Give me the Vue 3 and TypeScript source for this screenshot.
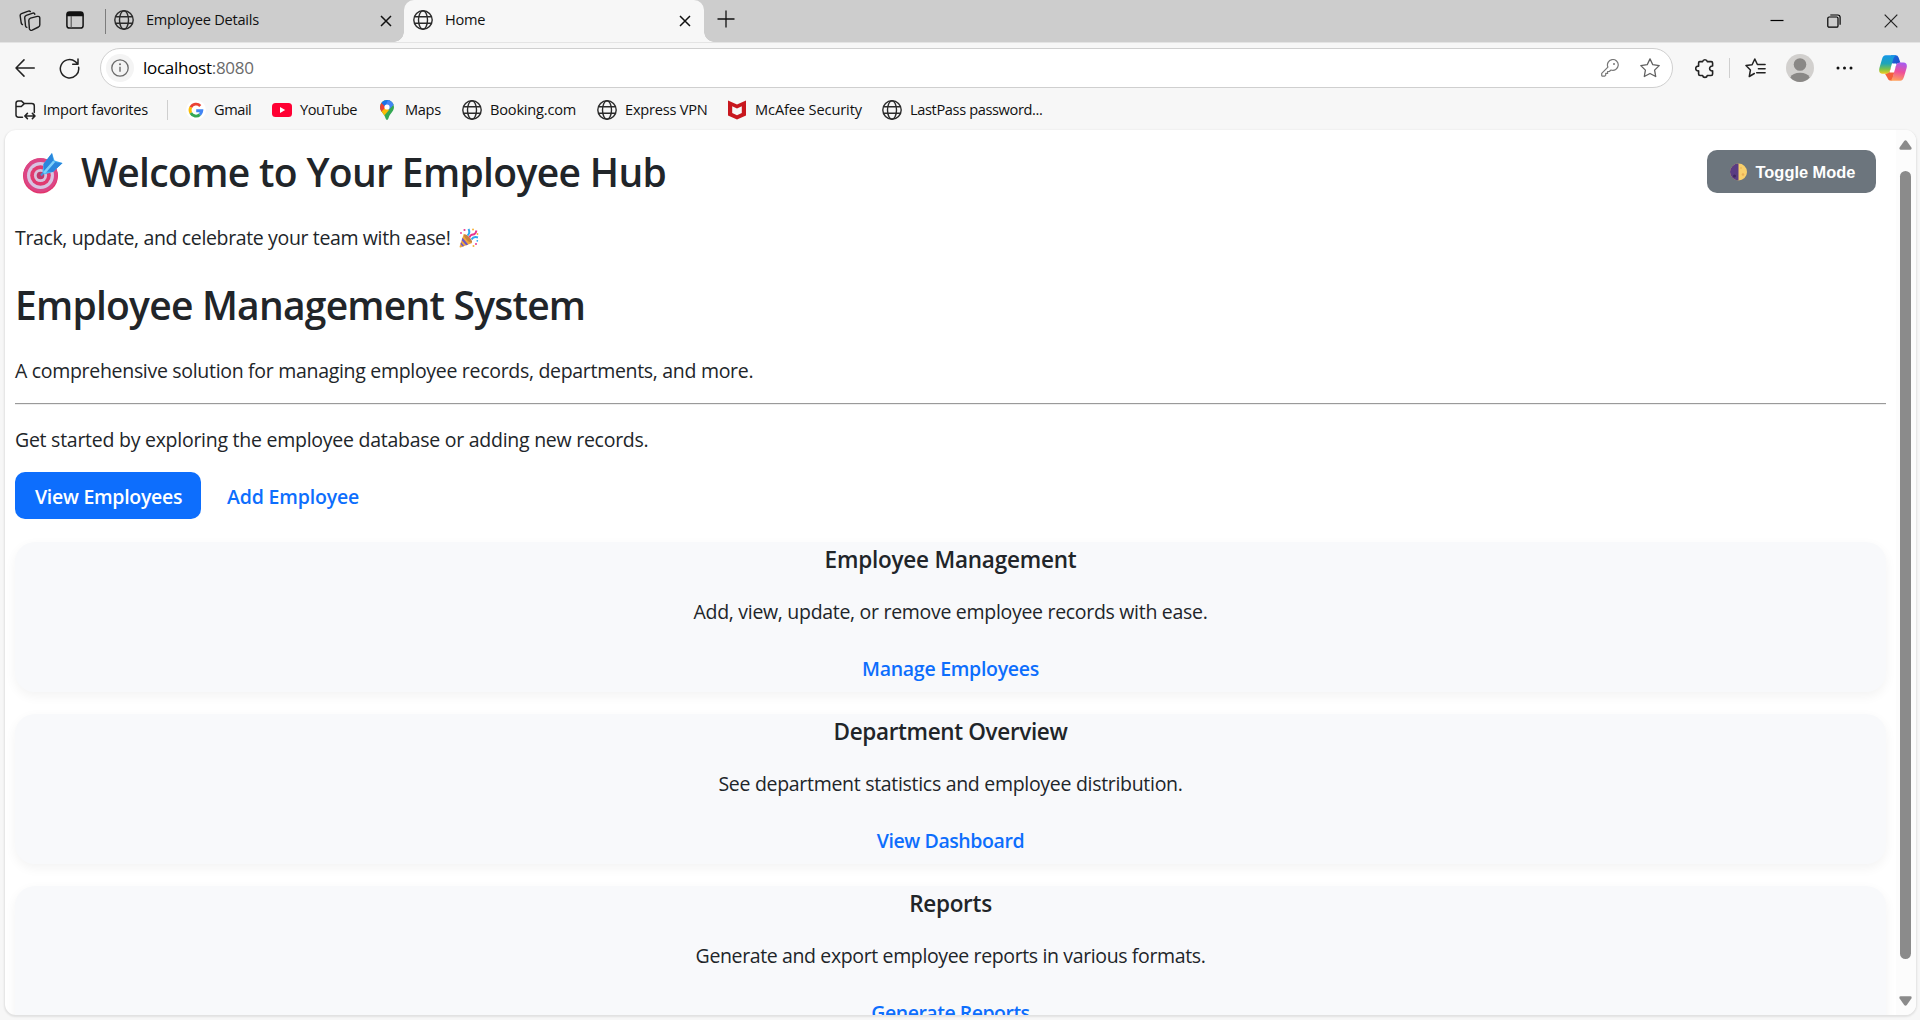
<script setup lang="ts">
interface Bookmark {
  label: string
  icon: 'google' | 'youtube' | 'maps' | 'globe' | 'mcafee'
  width: number
  spacing: number
}

interface Feature {
  title: string
  text: string
  action: string
  spacing: [number, number, number]
}

const bookmarks: Bookmark[] = [
  { label: 'Gmail', icon: 'google', width: 86, spacing: -0.45 },
  { label: 'YouTube', icon: 'youtube', width: 105, spacing: -0.43 },
  { label: 'Maps', icon: 'maps', width: 85, spacing: -0.33 },
  { label: 'Booking.com', icon: 'globe', width: 135, spacing: -0.2 },
  { label: 'Express VPN', icon: 'globe', width: 130, spacing: -0.23 },
  { label: 'McAfee Security', icon: 'mcafee', width: 155, spacing: -0.12 },
  { label: 'LastPass password...', icon: 'globe', width: 180, spacing: -0.37 },
]

const features: Feature[] = [
  {
    title: 'Employee Management',
    text: 'Add, view, update, or remove employee records with ease.',
    action: 'Manage Employees',
    spacing: [-0.22, -0.3, -0.28],
  },
  {
    title: 'Department Overview',
    text: 'See department statistics and employee distribution.',
    action: 'View Dashboard',
    spacing: [-0.35, -0.3, -0.41],
  },
  {
    title: 'Reports',
    text: 'Generate and export employee reports in various formats.',
    action: 'Generate Reports',
    spacing: [-0.28, -0.37, -0.49],
  },
]

const track = (value: number) => ({ letterSpacing: `${value}px` })
</script>

<template>
  <div class="browser">
    <svg class="defs" width="0" height="0" aria-hidden="true">
      <symbol id="globe" viewBox="0 0 20 20">
        <g fill="none" stroke="#2b2b2b" stroke-width="1.4">
          <circle cx="10" cy="10" r="9.2" />
          <ellipse cx="10" cy="10" rx="4.5" ry="9.2" />
          <path d="M1.6 6.7h16.8M1.6 13.3h16.8" />
        </g>
      </symbol>
      <symbol id="close" viewBox="0 0 12 12">
        <path d="M1 1l10 10M11 1L1 11" fill="none" stroke="#111" stroke-width="1.5" />
      </symbol>
    </svg>

    <header class="tabstrip">
      <svg class="workspaces" width="22" height="22" viewBox="0 0 22 22" fill="none" stroke="#1c1c1c" stroke-width="1.4" stroke-linejoin="round" stroke-linecap="round">
        <path d="M11.500 8.100l6.800-1.700q2.300-.4 2.500 1.400v7q0 1.500-1.300 2.200l-6.300 3.100q-2.200.8-2.800-1.200l-.6-8.300q0-1.900 1.700-2.500z" />
        <path d="M15.900 4.200q-.5-1.500-2.100-1L7.300 5.400Q5.500 6.200 5.700 7.800l.8 8q.2 1.200 1.300 1.600" />
        <path d="M11.300 1.500Q10.500.6 9.300 1.100L2.500 3.700Q.9 4.400 1.200 6l1 7q.3 1.200 1.200 1.500" />
      </svg>
      <svg class="tabmenu" width="18" height="18" viewBox="0 0 18 18">
        <rect x=".9" y=".9" width="16.2" height="16.2" rx="2.6" fill="none" stroke="#111" stroke-width="1.5" />
        <path d="M.9 5.200V3.200A2.300 2.300 0 013.200.9h11.600a2.300 2.300 0 012.300 2.300v2z" fill="#111" />
        <path d="M5.200 5v12" stroke="#555" stroke-width="1.100" />
      </svg>
      <span class="strip-rule"></span>
      <div class="tab tab-idle">
        <svg width="20" height="20"><use href="#globe" /></svg>
        <span class="tab-title">Employee Details</span>
        <svg class="tab-close" width="12" height="12"><use href="#close" /></svg>
      </div>
      <div class="tab tab-active">
        <svg width="20" height="20"><use href="#globe" /></svg>
        <span class="tab-title">Home</span>
        <svg class="tab-close" width="12" height="12"><use href="#close" /></svg>
      </div>
      <svg class="newtab" width="18" height="18" viewBox="0 0 18 18"><path d="M9 .5v17M.5 9h17" stroke="#111" stroke-width="1.300" /></svg>
      <div class="window-controls">
        <svg width="14" height="14" viewBox="0 0 14 14"><path d="M.5 6.500h13" stroke="#000" stroke-width="1.200" /></svg>
        <svg width="14" height="14" viewBox="0 0 14 14" fill="none" stroke="#000" stroke-width="1.200">
          <rect x=".8" y="3" width="10.200" height="10.200" rx="1.300" />
          <path d="M3.300 1h7.500q2.300 0 2.300 2.300v7.500" />
        </svg>
        <svg width="14" height="14" viewBox="0 0 14 14"><path d="M.7.7l12.600 12.600M13.300.7L.7 13.300" stroke="#222" stroke-width="1.200" /></svg>
      </div>
    </header>

    <nav class="toolbar">
      <svg class="back" width="20" height="18" viewBox="0 0 20 18" fill="none" stroke="#222" stroke-width="1.500" stroke-linecap="round" stroke-linejoin="round"><path d="M19.300 9H1M9 .9L1 9l8 8.100" /></svg>
      <svg class="reload" width="21" height="21" viewBox="0 0 21 21" fill="none" stroke="#222" stroke-width="1.500" stroke-linecap="round" stroke-linejoin="round"><path d="M19.600 9.200A9.200 9.200 0 1116.300 3.600l2.500 2.200M19 1v5.200h-5.300" /></svg>
      <div class="address">
        <span class="site-info">
          <svg width="18" height="18" viewBox="0 0 18 18"><circle cx="9" cy="9" r="8.200" fill="none" stroke="#6b6b6b" stroke-width="1.300" /><path d="M9 7.800v5" stroke="#6b6b6b" stroke-width="1.400" /><circle cx="9" cy="5.300" r="1" fill="#6b6b6b" /></svg>
        </span>
        <span class="url">localhost<span class="port">:8080</span></span>
        <svg class="key" width="18" height="18" viewBox="0 0 18 18" fill="none" stroke="#777" stroke-width="1.200" stroke-linejoin="round"><path d="M6.900 8.100A5.400 5.400 0 1110 11l-1.700 1.500H6.600v1.900H4.700v1.800l-.9.900H1.100q-.4 0-.4-.5v-2.300z" /><circle cx="13" cy="4.900" r="1" fill="#777" stroke="none" /></svg>
        <svg class="star" width="20" height="20" viewBox="0 0 20 20" fill="none" stroke="#606060" stroke-width="1.300" stroke-linejoin="round"><path d="M10 .9l2.800 5.800 6.400.9-4.600 4.500 1.100 6.400L10 15.500l-5.700 3 1.100-6.400L.8 7.600l6.400-.9z" /></svg>
      </div>
      <svg class="extensions" width="20" height="21" viewBox="0 0 20 21" fill="none" stroke="#222" stroke-width="1.600" stroke-linejoin="round"><path d="M4.700 3.600h2.900a2.400 2.400 0 014.700 0h3.900q1.400 0 1.400 1.400v3a2.500 2.500 0 100 4.900v3.100q0 1.500-1.500 1.500h-3.800a2.400 2.400 0 01-4.700 0H5.100q-1.500 0-1.500-1.500v-3.100a2.400 2.400 0 110-4.700V5q0-1.400 1.100-1.400z" /></svg>
      <span class="tool-rule"></span>
      <svg class="favorites" width="21" height="20" viewBox="0 0 21 20" fill="none" stroke="#222" stroke-width="1.500" stroke-linejoin="round" stroke-linecap="round"><path d="M9.300 15.500l-5 3 1.100-6.400L1 7.600l6.100-.9L9.800 1l2.600 5.500h7.700M13.400 10.800h6.700M11.700 14.800h8.400" /></svg>
      <svg class="avatar" width="28" height="28" viewBox="0 0 28 28"><circle cx="14" cy="14" r="14" fill="#d2d0ce" /><circle cx="14" cy="10.500" r="6.300" fill="#8a8886" /><path d="M4.300 23.500a10.300 7 0 0119.400 0A14 14 0 0114 28a14 14 0 01-9.700-4.500z" fill="#8a8886" /></svg>
      <svg class="more" width="17" height="4" viewBox="0 0 17 4" fill="#111"><circle cx="2" cy="2" r="1.500" /><circle cx="8.500" cy="2" r="1.500" /><circle cx="15" cy="2" r="1.500" /></svg>
      <svg class="copilot" width="28" height="26" viewBox="0 0 28 26">
        <defs>
          <linearGradient id="cpA" x1="0" y1="0" x2="0" y2="1"><stop offset="0" stop-color="#1597e8" /><stop offset=".45" stop-color="#1fa5b8" /><stop offset=".75" stop-color="#7cc24a" /><stop offset="1" stop-color="#f1cb1d" /></linearGradient>
          <linearGradient id="cpB" x1=".6" y1="0" x2=".4" y2="1"><stop offset="0" stop-color="#a65cf0" /><stop offset=".5" stop-color="#ee4f9a" /><stop offset="1" stop-color="#ffa25c" /></linearGradient>
          <linearGradient id="cpC" x1="0" y1="0" x2="1" y2="1"><stop offset="0" stop-color="#1b6fe0" /><stop offset="1" stop-color="#2044c4" /></linearGradient>
        </defs>
        <path d="M12 .3h4.600q2.200 0 3 2.300l1.800 5.200q-3.500-.2-4.400 2.700l-.8 2.200L13 8z" fill="url(#cpC)" />
        <path d="M6 18.700q4-.2 5-3.400l.8-2.700 3.700 4.600-2.500 8.300q-3.500.5-4.600-2.800z" fill="#f4603a" />
        <path d="M13 8.500h4q.8-.2.300 1.300L15 17.500h-4.500z" fill="#fff" />
        <path d="M6.800.3h10.600q-2.200.6-3 3.300L11 15.300q-1 3.500-4.200 3.500H3.500Q-.8 18.500.4 13L2.900 4.500Q4 .3 6.800.3z" fill="url(#cpA)" />
        <path d="M21.200 25.700H10.600q2.200-.6 3-3.300L17 10.700q1-3.300 4.200-3.300h3.300q4.300.3 3.100 5.600l-2.500 8.500q-1.100 4.200-3.900 4.200z" fill="url(#cpB)" />
      </svg>
    </nav>

    <nav class="bookmarks">
      <div class="bookmark import">
        <svg width="21" height="20" viewBox="0 0 21 20" fill="none" stroke="#222" stroke-width="1.500" stroke-linejoin="round" stroke-linecap="round"><path d="M7.500 17.200H3.400Q1 17.200 1 14.800V3.200Q1 .9 3.300.9h3l3 2.700h7.500q2.500 0 2.500 2.500v6.500M1 6.500h5.300l3-2.900M10 16h9.700M12.400 13.400L9.800 16l2.600 2.600M17.400 13.400L20 16l-2.600 2.600" /></svg>
        <span>Import favorites</span>
      </div>
      <span class="bookmark-rule"></span>
      <div v-for="b in bookmarks" :key="b.label" class="bookmark" :style="{ width: `${b.width}px` }">
        <svg v-if="b.icon === 'globe'" width="20" height="20"><use href="#globe" /></svg>
        <svg v-else-if="b.icon === 'google'" width="20" height="20" viewBox="0 0 20 20">
          <circle cx="10" cy="10" r="10" fill="#fff" />
          <g fill="none" stroke-width="2.900">
            <path d="M14.300 5.900A5.900 5.900 0 004.800 7.300" stroke="#ea4335" />
            <path d="M4.800 7.300a5.900 5.900 0 000 5.700" stroke="#fbbc05" />
            <path d="M4.800 13a5.900 5.900 0 009.100 1.600" stroke="#34a853" />
            <path d="M13.900 14.600a5.800 5.800 0 001.900-3.900H10.200" stroke="#4285f4" />
          </g>
        </svg>
        <svg v-else-if="b.icon === 'youtube'" width="20" height="20" viewBox="0 0 20 20"><rect y="3" width="20" height="14" rx="3.500" fill="#ff0033" /><path d="M8 7l5.200 3L8 13z" fill="#fff" /></svg>
        <svg v-else-if="b.icon === 'maps'" width="20" height="20" viewBox="0 0 20 20">
          <clipPath id="pin"><path d="M10 0a7 7 0 017 7c0 4.500-4.200 6.200-5.500 11.200Q10.900 20 10 20t-1.500-1.800C7.200 13.200 3 11.500 3 7a7 7 0 017-7z" /></clipPath>
          <g clip-path="url(#pin)">
            <path d="M0 0h20v20H0z" fill="#34a853" />
            <path d="M0 8l4.800-5.500L10 7 5 12.500 0 13z" fill="#ea4335" />
            <path d="M3.500 0h12L9 7.500 4.500 3z" fill="#1a73e8" />
            <path d="M11 0h6v4.500L11.500 10 8 7z" fill="#4285f4" />
            <path d="M3 13l6-6 3 3-6 7z" fill="#fbbc04" />
          </g>
          <circle cx="10" cy="7" r="2.600" fill="#fff" />
        </svg>
        <svg v-else width="20" height="20" viewBox="0 0 20 20"><path d="M1 .6l9 4 9-4V15.400L10 19.600l-9-4.200z" fill="#c8171e" /><path d="M5.200 6.200l4.800 2.200 4.800-2.200v6.700L10 15.200l-4.800-2.300z" fill="#f7f7f7" /></svg>
        <span :style="track(b.spacing)">{{ b.label }}</span>
      </div>
    </nav>

    <div class="viewport">
      <main class="page">
        <div class="topline">
          <h1 class="welcome">
            <svg class="target" width="41" height="42" viewBox="0 0 41 42">
              <circle cx="18.500" cy="24" r="17.500" fill="#e2356c" />
              <circle cx="18.500" cy="23" r="17" fill="#dc4585" />
              <circle cx="18.500" cy="23.500" r="13.500" fill="#d8c3e2" />
              <circle cx="18.500" cy="23.500" r="10.300" fill="#e03a70" />
              <circle cx="18.500" cy="23.500" r="6.600" fill="#d9c0dc" />
              <circle cx="18.500" cy="23.500" r="3.800" fill="#c0386b" />
              <path d="M19 23.500L31 10" stroke="#4b8fd8" stroke-width="2" />
              <path d="M20.500 19.500l1-7.500 8.500-11 2.500 7.500 8 2.500-9.500 9-9 2.500z" fill="#47b4f2" />
              <path d="M30 1l1.500 8L22 19l-.5-7zM40.500 11l-8.500-1-7.500 9.500 6.500.5z" fill="#2b86dc" />
              <path d="M32 9.500L22 21" stroke="#7ed0fa" stroke-width="2.500" />
            </svg>
            <span>Welcome to Your Employee Hub</span>
          </h1>
          <button class="toggle" type="button">
            <svg width="17" height="18" viewBox="0 0 17 18"><circle cx="8.500" cy="9" r="8.500" fill="#f8cf6b" /><path d="M8.500.5a8.500 8.500 0 000 17z" fill="#5b3c82" /><circle cx="4.500" cy="13" r="1.500" fill="#41275f" /><circle cx="13" cy="11.500" r="1.300" fill="#e8ae56" /><circle cx="11" cy="5" r="1" fill="#eebb5c" /></svg>
            <span>Toggle Mode</span>
          </button>
        </div>
        <p class="tagline">
          <span>Track, update, and celebrate your team with ease!</span>
          <svg width="20" height="20" viewBox="0 0 20 20">
            <path d="M4.800 5.800L.6 18.500q-.2 1.200 1 .9l11.600-4.300z" fill="#f2a93b" />
            <path d="M3.500 9.800l5.700 6.700-2 .7-4.500-5zM2 14.300l3.200 3.700-1.700.6-2-2.500z" fill="#6b55c8" />
            <ellipse cx="9" cy="10.500" rx="2" ry="5.600" transform="rotate(-43 9 10.500)" fill="#c9823f" />
            <path d="M8.500 7.500q3-2.500 1-6.500M12.500 11.500q2-3.500 6.500-2" fill="none" stroke="#2fa6ee" stroke-width="2" />
            <path d="M10.500 9.500q1-3 3.500-3t3.500-4" fill="none" stroke="#e8368f" stroke-width="1.900" />
            <g fill="#e8368f"><circle cx="5.500" cy="2" r="1.100" /><circle cx="2" cy="5" r=".9" /><circle cx="17" cy="16" r="1" /></g>
            <g fill="#f7b23b"><circle cx="14" cy="1.500" r="1" /><circle cx="18.500" cy="6" r=".9" /><circle cx="14.500" cy="18" r="1" /></g>
            <circle cx="18.300" cy="12.800" r=".9" fill="#2fa6ee" />
          </svg>
        </p>
        <h1 class="heading">Employee Management System</h1>
        <p class="summary">A comprehensive solution for managing employee records, departments, and more.</p>
        <hr />
        <p class="intro">Get started by exploring the employee database or adding new records.</p>
        <div class="actions">
          <a class="btn primary">View Employees</a>
          <a class="btn link">Add Employee</a>
        </div>
        <section v-for="f in features" :key="f.title" class="card">
          <h5 :style="track(f.spacing[0])">{{ f.title }}</h5>
          <p :style="track(f.spacing[1])">{{ f.text }}</p>
          <a :style="track(f.spacing[2])">{{ f.action }}</a>
        </section>
      </main>
      <aside class="scrollbar">
        <svg width="13" height="10" viewBox="0 0 13 10"><path d="M5.200.9q1.300-1.500 2.600 0l4.600 6.600q.8 2-1 2.200H1.600q-1.800-.2-1-2.200z" fill="#8b8b8b" /></svg>
        <span class="thumb"></span>
        <svg width="13" height="10" viewBox="0 0 13 10"><path d="M5.200 9.100q1.300 1.500 2.600 0l4.600-6.600q.8-2-1-2.200H1.600q-1.800.2-1 2.200z" fill="#8b8b8b" /></svg>
      </aside>
    </div>
  </div>
</template>

<style>
body { background: #f7f7f7; overflow: hidden; }
</style>

<style scoped>
* { box-sizing: border-box; }
svg { flex: none; display: block; }
.defs { position: absolute; }
.browser { width: 1920px; height: 1020px; display: flex; flex-direction: column; overflow: hidden; background: #f7f7f7; color: #111; font-family: "Open Sans", "Noto Sans", sans-serif; font-size: 14.6px; }

.tabstrip { height: 42px; flex: none; display: flex; align-items: flex-start; background: #cdcdcd; }
.workspaces { margin: 10px 0 0 19px; }
.tabmenu { margin: 11px 0 0 25px; }
.strip-rule { width: 1px; height: 25px; margin: 9px 0 0 21px; background: #7c7c7c; }
.tab { display: flex; align-items: center; height: 42px; padding-bottom: 2px; }
.tab-title { flex: 1; line-height: 20px; margin-bottom: 2px; letter-spacing: -0.25px; }
.tab-idle { width: 298px; padding-left: 8px; padding-right: 12px; }
.tab-idle .tab-title { margin-left: 12px; }
.tab-active { width: 300px; padding-left: 9px; padding-right: 13px; background: #f7f7f7; border-radius: 10px 10px 0 0; position: relative; }
.tab-active .tab-title { margin-left: 12px; }
.tab-active::before, .tab-active::after { content: ""; position: absolute; bottom: 0; width: 10px; height: 10px; }
.tab-active::before { left: -10px; background: radial-gradient(circle at 0 0, transparent 9.5px, #f7f7f7 10px); }
.tab-active::after { right: -10px; background: radial-gradient(circle at 100% 0, transparent 9.5px, #f7f7f7 10px); }
.tab-close { margin-top: 1px; }
.newtab { margin: 10px 0 0 13px; }
.window-controls { margin: 14px 22px 0 auto; display: flex; gap: 43px; }

.toolbar { height: 51px; flex: none; display: flex; align-items: center; padding: 0 13px 0 15px; border-top: 1px solid #e4e4e4; }
.reload { margin-left: 24px; }
.address { width: 1573px; height: 40px; margin-left: 20px; display: flex; align-items: center; border: 1px solid #cfcfcf; border-radius: 20px; background: #fff; padding: 0 12px 0 5px; }
.site-info { width: 28px; height: 28px; display: flex; align-items: center; justify-content: center; border-radius: 50%; background: #f4f4f4; }
.url { flex: 1; margin-left: 9px; margin-bottom: 1px; font-size: 17px; line-height: 24px; letter-spacing: -0.28px; color: #000; }
.port { color: #6b6b6b; }
.star { margin-left: 21px; }
.extensions { margin-left: 22px; }
.tool-rule { width: 1px; height: 20px; margin-left: 14px; background: #cfcfcf; }
.favorites { margin-left: 15px; }
.avatar { margin-left: 20px; }
.more { margin-left: 22px; }
.copilot { margin-left: auto; }

.bookmarks { height: 37px; flex: none; display: flex; align-items: center; padding-left: 15px; padding-bottom: 3px; }
.bookmark { display: flex; align-items: center; gap: 8px; white-space: nowrap; line-height: 20px; flex: none; }
.bookmark span { margin-bottom: 2px; }
.import { letter-spacing: -0.28px; width: 152px; gap: 7px; }
.bookmark-rule { width: 1px; height: 20px; margin-right: 18px; background: #cfcfcf; }

.viewport { width: 1911px; height: 885px; flex: none; margin-left: 5px; display: flex; overflow: hidden; background: #fff; border-radius: 11px; box-shadow: 0 1px 2px 1px rgba(0, 0, 0, 0.09); }
.page { width: 1891px; padding: 18px 10px 0; color: #212529; font-size: 19.5px; }
.page h1, .page h5, .page p { margin: 0; white-space: nowrap; }
.topline { display: flex; justify-content: space-between; height: 48px; }
.welcome { display: flex; font-size: 39px; font-weight: 600; line-height: 48px; letter-spacing: -0.65px; }
.target { margin: 4px 18px 0 7px; }
.toggle { width: 169px; height: 43px; margin: 2px 10px 0 0; padding: 0 0 0 2px; display: flex; align-items: center; justify-content: center; gap: 9px; border: 0; border-radius: 10px; background: #6c757d; color: #fff; font: bold 16.4px/20px "Liberation Sans", Arial, sans-serif; }
.page .tagline { display: flex; margin-top: 27px; line-height: 30px; letter-spacing: -0.36px; }
.tagline svg { margin: 5px 0 0 9px; }
.heading { font-size: 39px; font-weight: 600; line-height: 48px; letter-spacing: -0.77px; }
.page .heading { margin-top: 28px; }
.summary, .intro { line-height: 30px; }
.page .summary { margin-top: 27px; letter-spacing: -0.305px; }
hr { margin: 17px 0 20px; border: 0; height: 2px; background: linear-gradient(#9a9a9a 50%, #eee 50%); }
.page .intro { letter-spacing: -0.26px; }
.actions { display: flex; margin-top: 17px; font-weight: 600; }
.btn { height: 47px; line-height: 49px; padding: 0 20px; border-radius: 10px; white-space: nowrap; }
.primary { width: 186px; background: #0d6efd; color: #fff; letter-spacing: -0.28px; }
.link { margin-left: 6px; color: #0d6efd; letter-spacing: -0.16px; }
.card { display: flex; flex-direction: column; align-items: center; height: 150px; margin-bottom: 22px; padding-top: 4px; border-radius: 20px; background: #f8f9fb; box-shadow: 0 4px 12px rgba(0, 0, 0, 0.05); }
.actions + .card { margin-top: 23px; }
.card h5 { font-size: 22.5px; font-weight: 600; line-height: 28px; }
.page .card p { margin-top: 23px; line-height: 30px; }
.card a { margin-top: 27px; line-height: 30px; font-weight: 600; color: #0d6efd; }

.scrollbar { width: 20px; display: flex; flex-direction: column; align-items: center; background: #fcfcfc; padding: 10px 1px 9px 0; }
.thumb { width: 11px; height: 788px; margin: 21px 0 auto; border-radius: 6px; background: #8b8b8b; }
</style>
